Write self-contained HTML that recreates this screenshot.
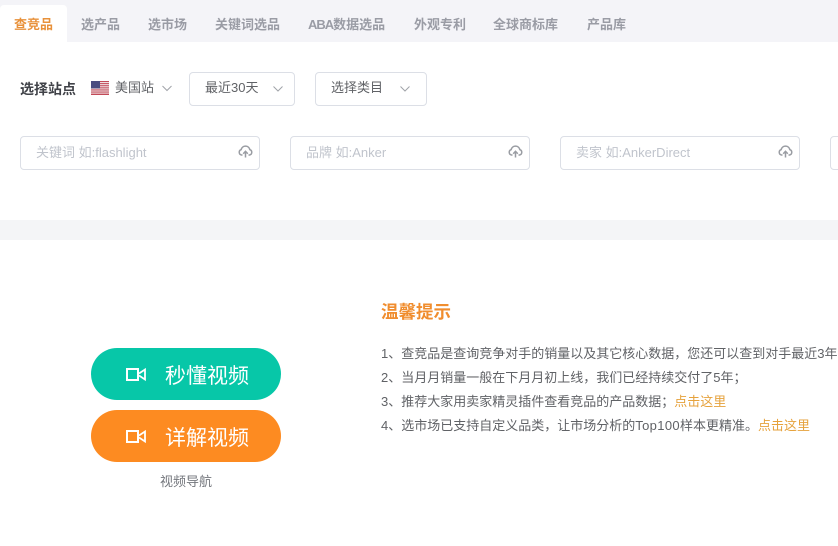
<!DOCTYPE html>
<html lang="zh-CN">
<head>
<meta charset="utf-8">
<style>
html,body{margin:0;padding:0;background:#fff;}
#p{position:relative;width:838px;height:546px;overflow:hidden;background:#fff;font-family:"Liberation Sans","Noto Sans CJK SC",sans-serif;color:#606266;}
#p div,#p svg{position:absolute;}
.t{white-space:nowrap;}
.tab{top:17px;height:16px;line-height:16px;font-size:13px;font-weight:700;color:#9a9ca5;white-space:nowrap;}
.box{border:1px solid #dcdfe6;border-radius:4px;box-sizing:border-box;background:#fff;}
.ph{top:145px;height:16px;line-height:16px;font-size:13px;color:#c0c4cc;white-space:nowrap;}
.sel{top:80px;height:16px;line-height:16px;font-size:13px;color:#606266;white-space:nowrap;}
.li{left:381px;height:20px;line-height:20px;font-size:13px;color:#606266;white-space:nowrap;}
.li b{font-weight:400;color:#e6a23c;}
.pill{left:91px;width:190px;height:52px;border-radius:26px;}
.pt{left:165px;width:90px;height:30px;line-height:30px;font-size:21px;color:#fff;white-space:nowrap;}
</style>
</head>
<body>
<div id="p">
  <div style="left:0;top:0;width:838px;height:42px;background:#f4f4f8;"></div>
  <div style="left:0;top:5px;width:67px;height:37px;background:#fff;border-radius:4px 4px 0 0;"></div>
  <div class="tab" style="left:14px;color:#e8913a;">查竞品</div>
  <div class="tab" style="left:81px;">选产品</div>
  <div class="tab" style="left:148px;">选市场</div>
  <div class="tab" style="left:215px;">关键词选品</div>
  <div class="tab" style="left:308px;"><span style="letter-spacing:-1px;">ABA</span>数据选品</div>
  <div class="tab" style="left:414px;">外观专利</div>
  <div class="tab" style="left:493px;">全球商标库</div>
  <div class="tab" style="left:587px;">产品库</div>

  <div class="t" style="left:20px;top:81px;height:16px;line-height:16px;font-size:14px;font-weight:700;color:#404248;">选择站点</div>
  <svg style="left:91px;top:81px;" width="18" height="14" viewBox="0 0 18 14">
    <rect width="18" height="14" fill="#f3eef0"/>
    <g fill="#c24a58"><rect y="0" width="18" height="1.1"/><rect y="2.1" width="18" height="1.1"/><rect y="4.2" width="18" height="1.1"/><rect y="6.3" width="18" height="1.1"/><rect y="8.4" width="18" height="1.1"/><rect y="10.5" width="18" height="1.1"/><rect y="12.6" width="18" height="1.4"/></g>
    <rect width="9" height="7.4" fill="#4a4d80"/>
  </svg>
  <div class="sel" style="left:115px;">美国站</div>
  <svg style="left:161px;top:84px;" width="12" height="8" viewBox="0 0 12 8"><path d="M1.5 2 L6 6.5 L10.5 2" fill="none" stroke="#a0a3a9" stroke-width="1"/></svg>

  <div class="box" style="left:189px;top:72px;width:106px;height:34px;"></div>
  <div class="sel" style="left:205px;">最近30天</div>
  <svg style="left:272px;top:85px;" width="12" height="8" viewBox="0 0 12 8"><path d="M1.5 1.5 L6 6 L10.5 1.5" fill="none" stroke="#a0a3a9" stroke-width="1"/></svg>

  <div class="box" style="left:315px;top:72px;width:112px;height:34px;"></div>
  <div class="sel" style="left:331px;">选择类目</div>
  <svg style="left:399px;top:85px;" width="12" height="8" viewBox="0 0 12 8"><path d="M1.5 1.5 L6 6 L10.5 1.5" fill="none" stroke="#a0a3a9" stroke-width="1"/></svg>

  <div class="box" style="left:20px;top:136px;width:240px;height:34px;"></div>
  <div class="ph" style="left:36px;">关键词 如:flashlight</div>
  <svg style="left:238px;top:145px;" width="15" height="13" viewBox="0 0 15 13"><path d="M4.5 10 H3.4 A2.8 2.8 0 0 1 3.2 4.6 A4.4 4.4 0 0 1 11.8 4.6 A2.8 2.8 0 0 1 11.6 10 H10.5" fill="none" stroke="#9a9da3" stroke-width="1.5"/><path d="M7.5 12.5 V6.8 M5.2 8.8 L7.5 6.3 L9.8 8.8" fill="none" stroke="#9a9da3" stroke-width="1.5"/></svg>

  <div class="box" style="left:290px;top:136px;width:240px;height:34px;"></div>
  <div class="ph" style="left:306px;">品牌 如:Anker</div>
  <svg style="left:508px;top:145px;" width="15" height="13" viewBox="0 0 15 13"><path d="M4.5 10 H3.4 A2.8 2.8 0 0 1 3.2 4.6 A4.4 4.4 0 0 1 11.8 4.6 A2.8 2.8 0 0 1 11.6 10 H10.5" fill="none" stroke="#9a9da3" stroke-width="1.5"/><path d="M7.5 12.5 V6.8 M5.2 8.8 L7.5 6.3 L9.8 8.8" fill="none" stroke="#9a9da3" stroke-width="1.5"/></svg>

  <div class="box" style="left:560px;top:136px;width:240px;height:34px;"></div>
  <div class="ph" style="left:576px;">卖家 如:AnkerDirect</div>
  <svg style="left:778px;top:145px;" width="15" height="13" viewBox="0 0 15 13"><path d="M4.5 10 H3.4 A2.8 2.8 0 0 1 3.2 4.6 A4.4 4.4 0 0 1 11.8 4.6 A2.8 2.8 0 0 1 11.6 10 H10.5" fill="none" stroke="#9a9da3" stroke-width="1.5"/><path d="M7.5 12.5 V6.8 M5.2 8.8 L7.5 6.3 L9.8 8.8" fill="none" stroke="#9a9da3" stroke-width="1.5"/></svg>

  <div class="box" style="left:830px;top:136px;width:240px;height:34px;"></div>

  <div style="left:0;top:220px;width:838px;height:20px;background:#f4f5f7;"></div>

  <div class="pill" style="top:348px;background:#07c7a8;"></div>
  <svg style="left:125px;top:366px;" width="22" height="16" viewBox="0 0 22 16"><rect x="2" y="3" width="11" height="11" fill="none" stroke="#fff" stroke-width="2"/><path d="M14 7.5 L20 3.5 V13.5 L14 9.5" fill="none" stroke="#fff" stroke-width="1.8"/></svg>
  <div class="pt" style="top:362px;">秒懂视频</div>

  <div class="pill" style="top:410px;background:#fd8b21;"></div>
  <svg style="left:125px;top:428px;" width="22" height="16" viewBox="0 0 22 16"><rect x="2" y="3" width="11" height="11" fill="none" stroke="#fff" stroke-width="2"/><path d="M14 7.5 L20 3.5 V13.5 L14 9.5" fill="none" stroke="#fff" stroke-width="1.8"/></svg>
  <div class="pt" style="top:424px;">详解视频</div>

  <div class="t" style="left:160px;top:474px;height:16px;line-height:16px;font-size:13px;color:#73767c;">视频导航</div>

  <div class="t" style="left:381px;top:301px;height:22px;line-height:22px;font-size:17.5px;font-weight:700;color:#f08d2e;">温馨提示</div>
  <div class="li" style="top:344px;">1、查竞品是查询竞争对手的销量以及其它核心数据，您还可以查到对手最近3年的</div>
  <div class="li" style="top:368px;">2、当月月销量一般在下月月初上线，我们已经持续交付了5年；</div>
  <div class="li" style="top:392px;">3、推荐大家用卖家精灵插件查看竞品的产品数据；<b>点击这里</b></div>
  <div class="li" style="top:416px;">4、选市场已支持自定义品类，让市场分析的<span style="letter-spacing:.35px;">Top100</span>样本更精准。<b>点击这里</b></div>
</div>
</body>
</html>
